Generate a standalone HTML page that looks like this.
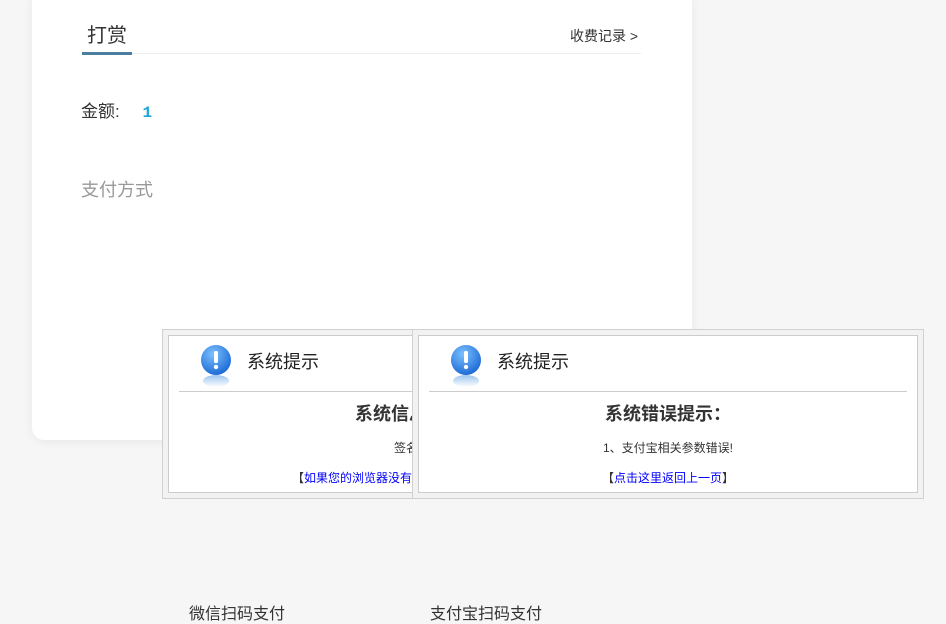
<!DOCTYPE html>
<html><head><meta charset="utf-8"><style>
*{margin:0;padding:0;box-sizing:border-box}
body{width:946px;height:620px;background:#f6f6f6;font-family:"Liberation Sans","Noto Sans CJK SC",sans-serif;position:relative;overflow:hidden;color:#333}
.card{position:absolute;left:32px;top:-10px;width:660px;height:450px;background:#fff;border-radius:12px;box-shadow:0 2px 10px rgba(0,0,0,.06)}
.abs{position:absolute;white-space:nowrap}
.frame{position:absolute;top:329px;width:512px;height:170px;background:#f2f2f2;border:1px solid #d0d0d0}
.inner{position:absolute;left:5px;top:5px;width:500px;height:158px;background:#fff;border:1px solid #ccc}
.icon{position:absolute;left:31px;top:9px;width:32px;height:44px}
.ttl{position:absolute;left:78px;top:12px;font-size:18px;color:#222}
.hr{position:absolute;left:10px;right:10px;top:55px;border-top:1px solid #ccc}
.h{position:absolute;left:0;right:0;top:64px;text-align:center;font-size:18px;font-weight:bold;color:#333}
.l{position:absolute;left:0;right:0;top:103px;text-align:center;font-size:12px;color:#333}
.k{position:absolute;left:0;right:0;top:133px;text-align:center;font-size:12px;color:#333}
.k a{color:#00f;text-decoration:none}
</style></head><body>
<div class="card"></div>
<div class="abs" style="left:87px;top:19px;font-size:20px;color:#333">打赏</div>
<div class="abs" style="left:82px;top:52px;width:50px;height:3px;background:#4a7fa0"></div>
<div class="abs" style="left:132px;top:53px;width:509px;height:1px;background:#eee"></div>
<div class="abs" style="left:570px;top:26px;font-size:14px;color:#333">收费记录 &gt;</div>
<div class="abs" style="left:81px;top:97px;font-size:17px;color:#333">金额: <span style="color:#1aa6d8;font-family:'Liberation Mono',monospace;font-size:16px;font-weight:bold;margin-left:18px">1</span></div>
<div class="abs" style="left:81px;top:176px;font-size:18px;color:#999">支付方式</div>

<div class="frame" style="left:162px"><div class="inner">
<svg class="icon" viewBox="0 0 32 44"><defs><radialGradient id="g" cx="0.4" cy="0.3" r="0.8"><stop offset="0" stop-color="#7cc0ff"/><stop offset="1" stop-color="#1060d0"/></radialGradient><linearGradient id="r" x1="0" y1="0" x2="0" y2="1"><stop offset="0" stop-color="#9cc4ee"/><stop offset="1" stop-color="#fff"/></linearGradient></defs><circle cx="16" cy="15" r="15" fill="url(#g)"/><rect x="14" y="6" width="4" height="12" rx="1.5" fill="#fff"/><circle cx="16" cy="22" r="2.2" fill="#fff"/><ellipse cx="16" cy="36" rx="13" ry="6" fill="url(#r)"/></svg>
<div class="ttl">系统提示</div><div class="hr"></div>
<div class="h">系统信息提示：</div><div class="l">签名错误</div>
<div class="k">【<a>如果您的浏览器没有自动跳转，请点击这里</a>】</div>
</div></div>

<div class="frame" style="left:412px"><div class="inner">
<svg class="icon" viewBox="0 0 32 44"><circle cx="16" cy="15" r="15" fill="url(#g)"/><rect x="14" y="6" width="4" height="12" rx="1.5" fill="#fff"/><circle cx="16" cy="22" r="2.2" fill="#fff"/><ellipse cx="16" cy="36" rx="13" ry="6" fill="url(#r)"/></svg>
<div class="ttl">系统提示</div><div class="hr"></div>
<div class="h">系统错误提示：</div><div class="l">1、支付宝相关参数错误!</div>
<div class="k">【<a>点击这里返回上一页</a>】</div>
</div></div>

<div class="abs" style="left:189px;top:600px;font-size:16px;color:#333">微信扫码支付</div>
<div class="abs" style="left:430px;top:600px;font-size:16px;color:#333">支付宝扫码支付</div>
</body></html>
